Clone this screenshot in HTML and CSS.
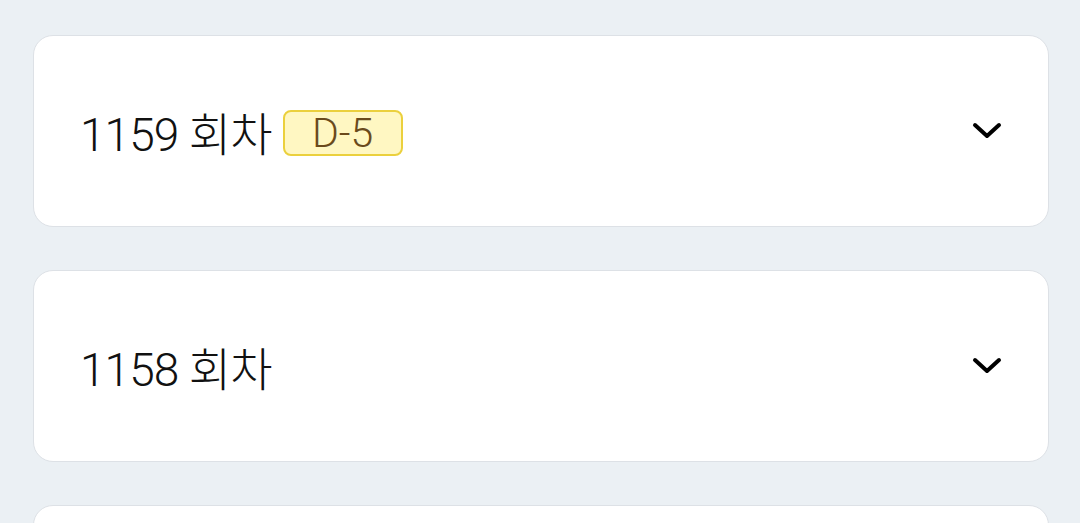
FILE: index.html
```html
<!DOCTYPE html>
<html lang="ko">
<head>
<meta charset="utf-8">
<link rel="stylesheet" href="styles.css">
</head>
<body>
<div class="list">
  <div class="card">
    <div class="title">
      <span class="round">1159 회차</span>
      <span class="badge">D-5</span>
    </div>
    <svg class="chev" viewBox="0 0 30 18" width="30" height="18"><path d="M3 3 L15 14 L27 3" fill="none" stroke="#000" stroke-width="4" stroke-linecap="round" stroke-linejoin="round"/></svg>
  </div>
  <div class="card">
    <div class="title">
      <span class="round">1158 회차</span>
    </div>
    <svg class="chev" viewBox="0 0 30 18" width="30" height="18"><path d="M3 3 L15 14 L27 3" fill="none" stroke="#000" stroke-width="4" stroke-linecap="round" stroke-linejoin="round"/></svg>
  </div>
  <div class="card card-partial"></div>
</div>
</body>
</html>
```

FILE: styles.css
```css
html, body {
  margin: 0;
  padding: 0;
  background: #ebf0f4;
  overflow: hidden;
}
body {
  font-family: Roboto, "Noto Sans CJK KR", sans-serif;
}
.list {
  display: flex;
  flex-direction: column;
  gap: 43px;
  padding: 35px 31px 0 33px;
}
.card {
  height: 190px;
  background: #fff;
  border: 1px solid #dde1e6;
  border-radius: 20px;
  display: flex;
  align-items: center;
  justify-content: space-between;
  padding: 0 46px 0 46px;
  flex-shrink: 0;
}
.title {
  display: flex;
  align-items: center;
  gap: 12px;
}
.round {
  font-size: 46px;
  font-weight: 300;
  color: #111;
  letter-spacing: -0.9px;
}
.badge {
  box-sizing: border-box;
  height: 46px;
  width: 120px;
  display: flex;
  align-items: center;
  justify-content: center;
  background: #fff7c2;
  border: 2px solid #ebd03d;
  border-radius: 8px;
  color: #6a4a1c;
  font-size: 41px;
  font-weight: 300;
  margin-top: 4px;
  margin-left: -1px;
}
.chev {
  display: block;
  margin-right: 0;
}
```
